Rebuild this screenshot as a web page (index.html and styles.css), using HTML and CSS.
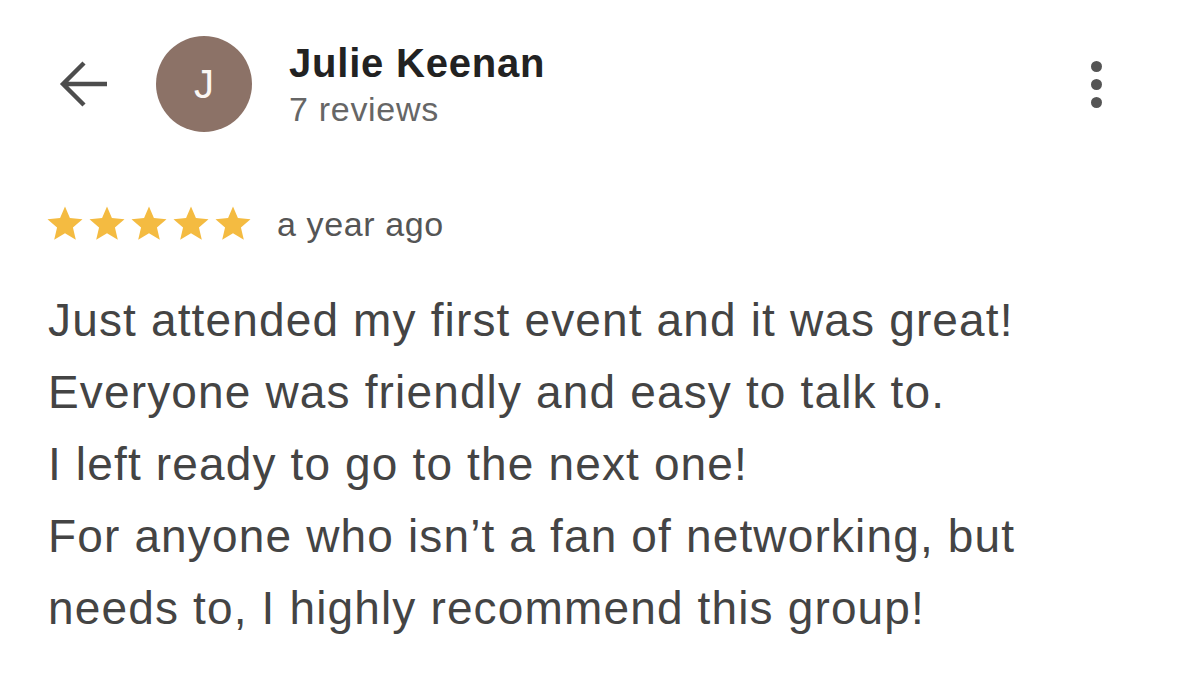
FILE: index.html
```html
<!DOCTYPE html>
<html lang="en">
<head>
  <meta charset="UTF-8">
  <title>Review - Julie Keenan</title>
  <link rel="stylesheet" href="styles.css">
</head>
<body>
  <div class="review">
    <header class="review-head">
      <svg class="back" width="50" height="50" viewBox="0 0 50 50">
        <path d="M4 25H48M25 4L4 25L25 46" fill="none" stroke="#4d4d4d" stroke-width="4.4"/>
      </svg>
      <div class="avatar">J</div>
      <div class="author">
        <div class="author-name">Julie Keenan</div>
        <div class="author-meta">7 reviews</div>
      </div>
      <div class="more">
        <span></span><span></span><span></span>
      </div>
    </header>

    <div class="rating">
      <div class="stars">
        <svg width="42" height="42" viewBox="0 0 24 24"><path d="M12 17.27L18.18 21l-1.64-7.03L22 9.24l-7.19-.61L12 2 9.19 8.63 2 9.24l5.46 4.73L5.82 21z"/></svg>
        <svg width="42" height="42" viewBox="0 0 24 24"><path d="M12 17.27L18.18 21l-1.64-7.03L22 9.24l-7.19-.61L12 2 9.19 8.63 2 9.24l5.46 4.73L5.82 21z"/></svg>
        <svg width="42" height="42" viewBox="0 0 24 24"><path d="M12 17.27L18.18 21l-1.64-7.03L22 9.24l-7.19-.61L12 2 9.19 8.63 2 9.24l5.46 4.73L5.82 21z"/></svg>
        <svg width="42" height="42" viewBox="0 0 24 24"><path d="M12 17.27L18.18 21l-1.64-7.03L22 9.24l-7.19-.61L12 2 9.19 8.63 2 9.24l5.46 4.73L5.82 21z"/></svg>
        <svg width="42" height="42" viewBox="0 0 24 24"><path d="M12 17.27L18.18 21l-1.64-7.03L22 9.24l-7.19-.61L12 2 9.19 8.63 2 9.24l5.46 4.73L5.82 21z"/></svg>
      </div>
      <span class="when">a year ago</span>
    </div>

    <p class="review-text">
      Just attended my first event and it was great!<br>
      Everyone was friendly and easy to talk to.<br>
      I left ready to go to the next one!<br>
      For anyone who isn’t a fan of networking, but<br>
      needs to, I highly recommend this group!
    </p>
  </div>
</body>
</html>
```

FILE: styles.css
```css
/* Ogólne */
body {
  margin: 0;
  background: #fff;
  font-family: "Liberation Sans", Arial, sans-serif;
  color: #444;
}
.review {
  padding: 36px 0 0 48px;
}

/* Nagłówek */
.review-head {
  display: flex;
  align-items: flex-start;
  padding-left: 11px;
  padding-right: 77px;
}
.back {
  margin-top: 23px;
  flex-shrink: 0;
}
.avatar {
  width: 96px;
  height: 96px;
  margin-left: 47px;
  border-radius: 50%;
  background: #8c7267;
  color: #fbf7f4;
  font-size: 40px;
  line-height: 96px;
  text-align: center;
  flex-shrink: 0;
}
.author {
  margin-left: 37px;
  margin-top: 5px;
}
.author-name {
  font-size: 40px;
  font-weight: 700;
  line-height: 44px;
  color: #222;
  letter-spacing: 0.8px;
}
.author-meta {
  font-size: 34px;
  line-height: 44px;
  margin-top: 2px;
  color: #666;
  letter-spacing: 0.7px;
}
.more {
  margin-left: auto;
  margin-top: 25px;
  display: flex;
  flex-direction: column;
  gap: 7px;
}
.more span {
  width: 11px;
  height: 11px;
  border-radius: 50%;
  background: #555;
}

/* Ocena */
.rating {
  display: flex;
  align-items: center;
  margin-top: 72px;
  height: 40px;
}
.stars {
  display: flex;
  margin-left: -4px;
  fill: #f4bb41;
}
.when {
  margin-left: 23px;
  font-size: 34px;
  line-height: 40px;
  color: #555;
  letter-spacing: 0.6px;
}

/* Treść */
.review-text {
  margin: 40px 0 0;
  font-size: 46px;
  line-height: 72px;
  letter-spacing: 1.15px;
  color: #444;
}
```
